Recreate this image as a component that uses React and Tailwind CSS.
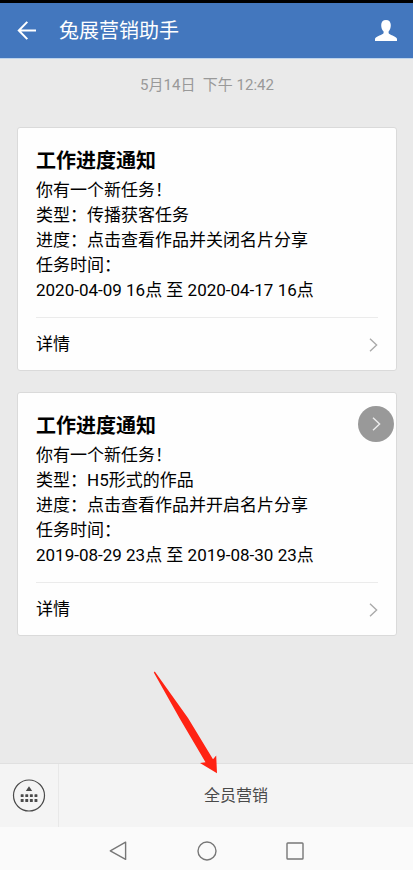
const messages = [
  {
    id: 1,
    title: '工作进度通知',
    lines: [
      '你有一个新任务！',
      '类型：传播获客任务',
      '进度：点击查看作品并关闭名片分享',
      '任务时间：',
      '2020-04-09 16点 至 2020-04-17 16点',
    ],
  },
  {
    id: 2,
    title: '工作进度通知',
    lines: [
      '你有一个新任务！',
      '类型：H5形式的作品',
      '进度：点击查看作品并开启名片分享',
      '任务时间：',
      '2019-08-29 23点 至 2019-08-30 23点',
    ],
    floating: true,
  },
];

function Chevron({ className }) {
  return (
    <svg viewBox="0 0 9 14" fill="none" stroke="currentColor" strokeWidth="1.4" className={className} aria-hidden="true">
      <path d="M1 0.8 L7.6 7 L1 13.2" />
    </svg>
  );
}

function Header() {
  return (
    <header className="flex h-[59px] items-center border-t-[3px] border-b border-t-black border-b-[#bdd3ec] bg-[#4377be] pt-px pr-[15px] pl-[17px] text-white">
      <button type="button" aria-label="返回">
        <svg viewBox="0 0 20 20" fill="none" stroke="currentColor" strokeWidth="2" className="h-5 w-5">
          <path d="M19 9.5 H2 M10.3 0.9 L1.8 9.5 L10.3 18.1" />
        </svg>
      </button>
      <h1 className="ml-[22px] flex-1 text-xl">兔展营销助手</h1>
      <button type="button" aria-label="个人资料">
        <svg viewBox="0 0 24 22" fill="currentColor" className="h-[22px] w-6">
          <path d="M12 0 C15 0 16.8 1.9 16.8 5 C16.8 8 16 10 14.6 11.4 V13 C15 14.8 22 16 23 18.8 V21 H1 V18.8 C2 16 9 14.8 9.6 13 V11.4 C8 10 7.2 8 7.2 5 C7.2 1.9 9 0 12 0 Z" />
        </svg>
      </button>
    </header>
  );
}

function MessageCard({ message }) {
  return (
    <article className="relative rounded-[3px] border border-[#dadada] bg-[#fefefe] px-[18px] pt-[19px] text-black">
      <h2 className="text-xl leading-7 font-bold">{message.title}</h2>
      <div className="mt-[3px] pb-[14px] text-[17px] leading-[25px]">
        {message.lines.map((line) => (
          <p key={line}>{line}</p>
        ))}
      </div>
      <a href="#detail" className="flex h-[53px] items-center justify-between border-t border-[#ebebeb] pt-px text-[17px]">
        详情
        <Chevron className="h-[14px] w-[9px] text-[#aaaaaa]" />
      </a>
      {message.floating && (
        <button
          type="button"
          aria-label="展开"
          className="absolute top-[13px] right-[2px] flex h-9 w-9 items-center justify-center rounded-full bg-[#999999] text-[#ededed]"
        >
          <Chevron className="h-[14px] w-[9px]" />
        </button>
      )}
    </article>
  );
}

function Footer() {
  return (
    <footer className="relative flex h-16 border-t border-[#e0e0e0] bg-[#f4f4f4] text-[#4a4a4a]">
      <button type="button" aria-label="切换键盘" className="flex w-[59px] items-center justify-center border-r border-[#e8e8e8]">
        <svg viewBox="0 0 34 34" className="h-[34px] w-[34px]">
          <circle cx="17" cy="16.5" r="15.5" fill="none" stroke="currentColor" strokeWidth="1.2" />
          <path d="M17 7.2 L20.2 12 H13.8 Z" fill="currentColor" />
          {[15.2, 20].map((y) =>
            [8.7, 13.3, 17.9, 22.5].map((x) => (
              <rect key={`${x}-${y}`} x={x} y={y} width="2.9" height="2.9" rx="0.5" fill="currentColor" />
            ))
          )}
        </svg>
      </button>
      <button type="button" className="flex-1 text-base">全员营销</button>
      {/* Red pointer towards the menu entry */}
      <svg viewBox="0 0 66 104" className="pointer-events-none absolute bottom-[52px] left-[37%] h-[104px] w-[66px]" aria-hidden="true">
        <path d="M1.8 0.6 L35 47 L60 88.3 L63.2 84.5 L64 102.3 L47 92 L52.5 91.3 L27 48 L0.8 1.5 Z" fill="#ff2313" />
      </svg>
    </footer>
  );
}

function SystemNav() {
  return (
    <nav className="flex h-[43px] items-center justify-center gap-[68px] bg-[#fafafa] pt-1 text-[#777777]">
      <button type="button" aria-label="后退">
        <svg viewBox="0 0 20 20" fill="none" stroke="currentColor" strokeWidth="1.4" strokeLinejoin="round" className="h-5 w-5">
          <path d="M16.6 1.2 V18.4 L1.3 9.8 Z" />
        </svg>
      </button>
      <button type="button" aria-label="主页">
        <svg viewBox="0 0 20 20" fill="none" stroke="currentColor" strokeWidth="1.4" className="h-5 w-5">
          <circle cx="10" cy="10" r="9" />
        </svg>
      </button>
      <button type="button" aria-label="最近任务">
        <svg viewBox="0 0 20 20" fill="none" stroke="currentColor" strokeWidth="1.4" className="h-5 w-5">
          <rect x="2" y="2" width="16" height="16" rx="0.8" />
        </svg>
      </button>
    </nav>
  );
}

export default function App() {
  return (
    <div lang="zh-CN" className="flex min-h-screen flex-col bg-[#eaeaea] font-['Roboto','Noto_Sans_CJK_SC',sans-serif]">
      <Header />
      <main className="flex-1 pr-4 pl-[17px]">
        <p className="pt-4 text-center text-[15px] leading-5 whitespace-pre text-[#999999]">5月14日  下午 12:42</p>
        <div className="mt-8 flex flex-col gap-[21px]">
          {messages.map((message) => (
            <MessageCard key={message.id} message={message} />
          ))}
        </div>
      </main>
      <Footer />
      <SystemNav />
    </div>
  );
}
